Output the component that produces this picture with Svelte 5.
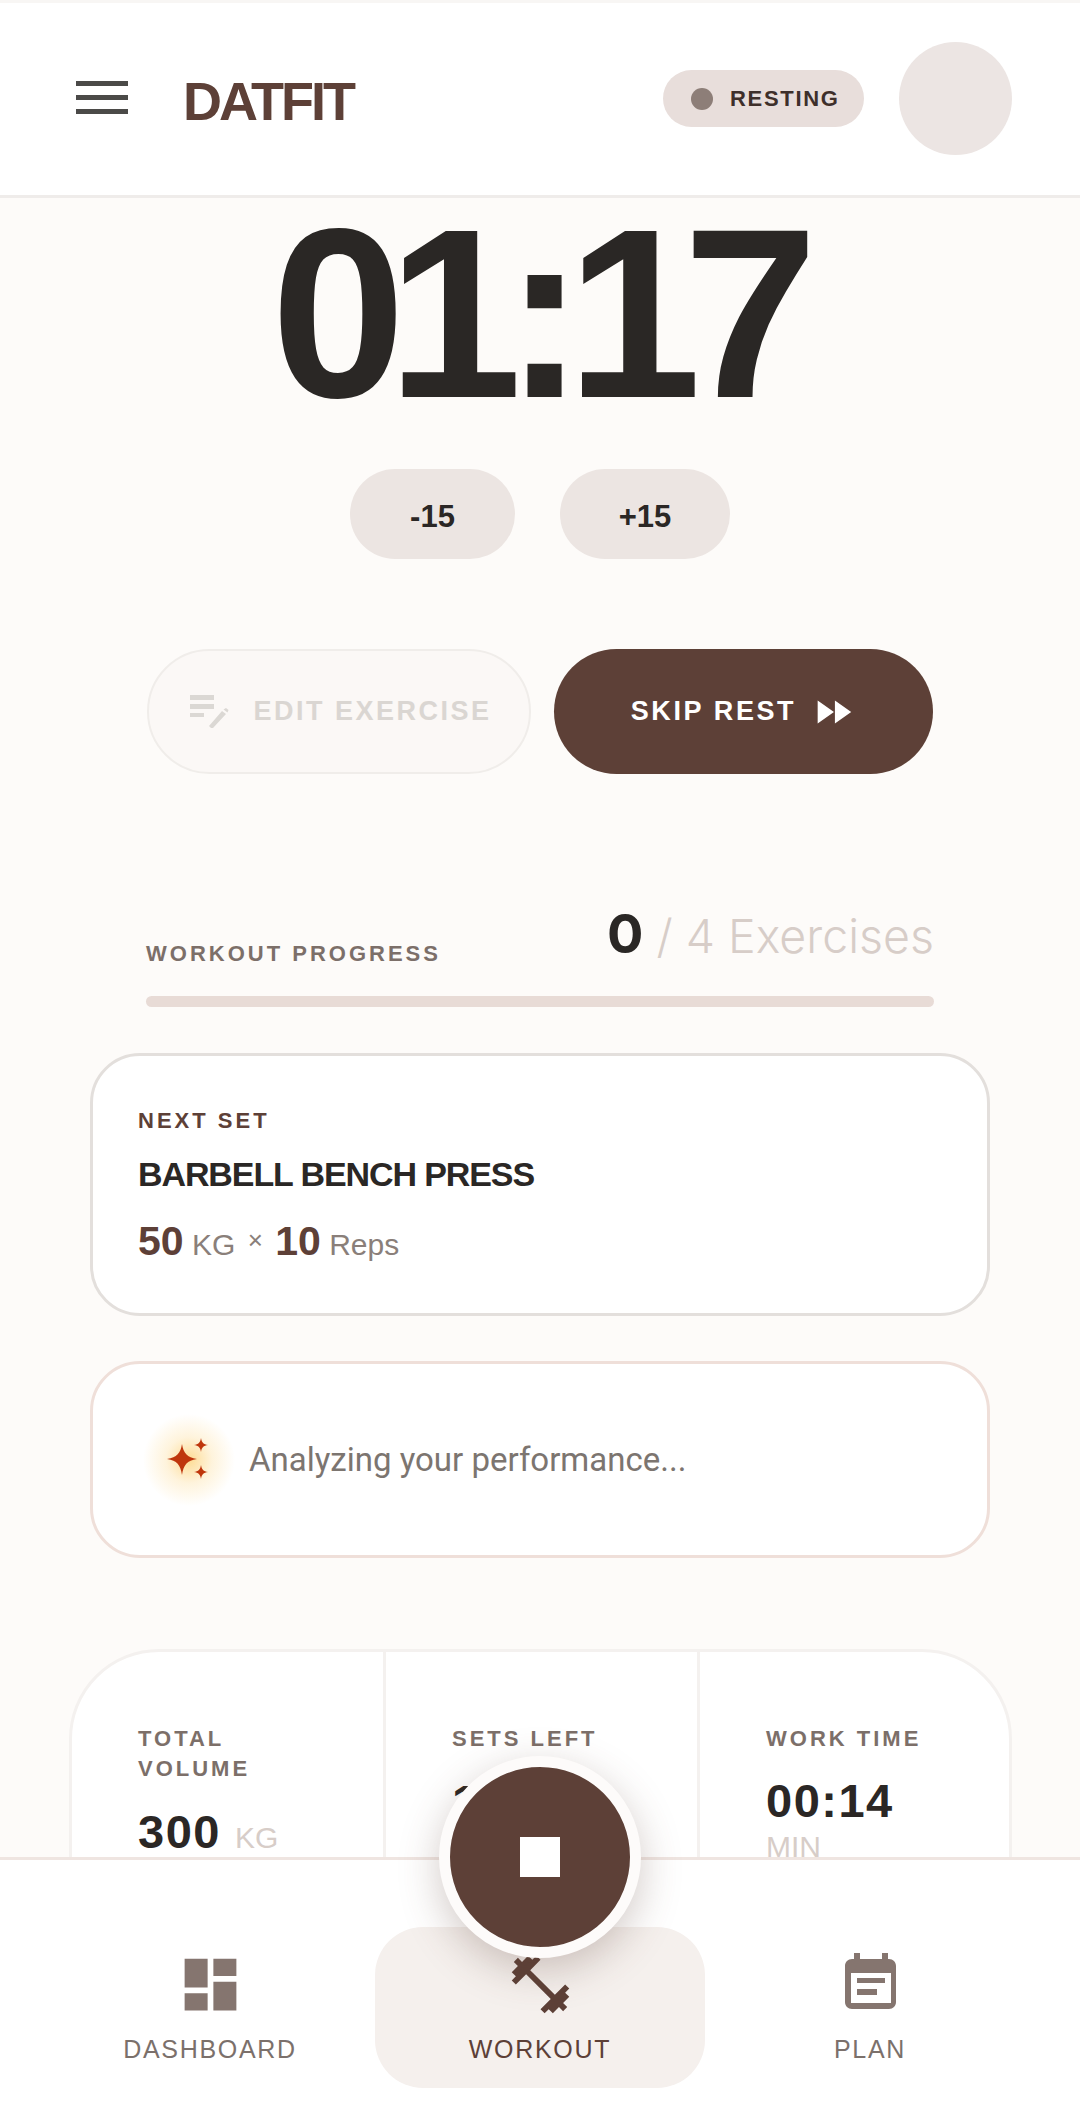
<script>
  const stats = [
    { label: 'TOTAL VOLUME', value: '300', unit: 'KG' },
    { label: 'SETS LEFT', value: '11', unit: '' },
    { label: 'WORK TIME', value: '00:14', unit: 'MIN', stack: true }
  ];
</script>

<div class="page">
  <header class="topbar">
    <button class="menu" aria-label="Menu"><span></span><span></span><span></span></button>
    <div class="logo">DATFIT</div>
    <div class="status"><i></i>RESTING</div>
    <div class="avatar"></div>
  </header>

  <main>
    <div class="timer">01:17</div>

    <div class="adjust">
      <button class="minus">-15</button>
      <button class="plus">+15</button>
    </div>

    <div class="actions">
      <button class="edit">
        <svg width="40" height="34" viewBox="0 0 40 34" fill="#dbd8d4">
          <path d="M0 0h24v5H0zM0 9h24v5H0zM0 18h14v4H0z" />
          <path d="M21 33l-2-2 13-15 4 3-13 14zM33.500 14.500l2.500-1.500 2.500 2-1 2.500z" />
        </svg>
        EDIT EXERCISE
      </button>
      <button class="skip">
        SKIP REST
        <svg width="46" height="46" viewBox="0 0 24 24" fill="#fff">
          <path d="M4 18l8.500-6L4 6v12zm9-12v12l8.500-6L13 6z" />
        </svg>
      </button>
    </div>

    <section class="progress">
      <div class="progress-head">
        <span class="eyebrow">WORKOUT PROGRESS</span>
        <span class="count"><b>0</b> / 4 Exercises</span>
      </div>
      <div class="track"></div>
    </section>

    <section class="card next">
      <div class="next-label">NEXT SET</div>
      <h2>BARBELL BENCH PRESS</h2>
      <div class="load">
        <b>50</b> <span>KG</span> <em>×</em> <b>10</b> <span>Reps</span>
      </div>
    </section>

    <section class="card insight">
      <div class="glow">
        <svg width="60" height="60" viewBox="0 0 60 60" fill="#bf360c">
          <path d="M23 14c1.500 9 5 13.500 15 15-10 1.500-13.500 6-15 16-1.500-10-5-14.500-15-16 10-1.500 13.500-6 15-15z" />
          <path d="M42 8c.7 4.500 2.500 6.500 7 7-4.500.7-6.300 2.500-7 7-.7-4.500-2.500-6.300-7-7 4.500-.5 6.300-2.500 7-7z" />
          <path d="M42 35c.7 4.500 2.500 6.500 7 7-4.500.7-6.300 2.500-7 7-.7-4.500-2.500-6.300-7-7 4.500-.5 6.300-2.500 7-7z" />
        </svg>
      </div>
      <p>Analyzing your performance...</p>
    </section>

    <section class="stats">
      {#each stats as s}
        <div class="stat">
          <div class="eyebrow">{s.label}</div>
          <div class="stat-value" class:stack={s.stack}>
            <b>{s.value}</b>
            {#if s.unit}<span>{s.unit}</span>{/if}
          </div>
        </div>
      {/each}
    </section>
  </main>

  <nav>
    <button class="fab" aria-label="Stop workout"><i></i></button>
    <div class="tab">
      <svg width="69" height="69" viewBox="0 0 24 24" fill="#85756f">
        <path d="M3 13h8V3H3v10zm0 8h8v-6H3v6zm10 0h8V11h-8v10zm0-18v6h8V3h-8z" />
      </svg>
      DASHBOARD
    </div>
    <div class="tab active">
      <svg width="69" height="69" viewBox="0 0 24 24" fill="#5d4037">
        <path d="M20.570 14.860L22 13.430 20.570 12 17 15.570 8.430 7 12 3.430 10.570 2 9.140 3.430 7.710 2 5.570 4.140 4.140 2.710 2.710 4.140l1.430 1.430L2 7.710l1.430 1.430L2 10.570 3.430 12 7 8.430 15.570 17 12 20.570 13.430 22l1.430-1.430L16.290 22l2.140-2.140 1.430 1.430 1.430-1.430-1.430-1.430L22 16.290z" />
      </svg>
      WORKOUT
    </div>
    <div class="tab">
      <svg width="69" height="69" viewBox="0 0 69 69" fill="#85756f">
        <path
          fill-rule="evenodd"
          d="M18 3h6v6h22V3h6v6h1c4 0 7 3 7 7v36c0 4-3 7-7 7H16c-4 0-7-3-7-7V16c0-4 3-7 7-7h2zM15 23v30h40V23zM21 28h28v5H21zM21 39h20v6H21z"
        />
      </svg>
      PLAN
    </div>
  </nav>
</div>

<style>
  :global(body) {
    margin: 0;
    background: #fdfbf9;
  }

  .page {
    display: flex;
    flex-direction: column;
    height: 2114px;
    overflow: hidden;
    font-family: 'Liberation Sans', Arial, sans-serif;
    color: #2b2725;
  }

  button {
    border: 0;
    padding: 0;
    font: inherit;
    color: inherit;
    background: none;
  }

  .topbar {
    display: flex;
    align-items: center;
    flex: none;
    box-sizing: border-box;
    height: 198px;
    padding: 0 68px 1px 76px;
    background: #fff;
    border-top: 3px solid #f8f6f4;
    border-bottom: 3px solid #efecea;
  }

  .menu {
    display: flex;
    flex-direction: column;
    gap: 9px;
    width: 52px;
    margin-bottom: 2px;
  }

  .menu span {
    display: block;
    height: 5px;
    background: #4b4a48;
  }

  .logo {
    margin: 5px 0 0 55px;
    font-size: 54px;
    line-height: 1;
    font-weight: 700;
    letter-spacing: -3px;
    color: #5d4037;
  }

  .status {
    display: flex;
    align-items: center;
    gap: 17px;
    box-sizing: border-box;
    width: 201px;
    height: 57px;
    margin-left: auto;
    padding-left: 28px;
    border-radius: 29px;
    background: #e8dedb;
    font-size: 22px;
    font-weight: 700;
    letter-spacing: 1.700px;
    color: #3e2f2a;
  }

  .status i {
    width: 22px;
    height: 22px;
    border-radius: 50%;
    background: #8d7e78;
  }

  .avatar {
    width: 113px;
    height: 113px;
    margin-left: 35px;
    border-radius: 50%;
    background: #ece5e3;
  }

  main {
    flex: 1;
    min-height: 0;
  }

  .timer {
    margin-top: 20px;
    padding-right: 9px;
    height: 190px;
    font-size: 242px;
    line-height: 190px;
    font-weight: 700;
    letter-spacing: -18px;
    text-align: center;
    color: #2a2725;
  }

  .adjust {
    display: flex;
    justify-content: center;
    gap: 45px;
    margin-top: 61px;
  }

  .adjust button {
    box-sizing: border-box;
    height: 90px;
    padding-top: 6px;
    border-radius: 45px;
    background: #ece5e2;
    font-size: 31px;
    font-weight: 700;
  }

  .minus {
    width: 165px;
  }

  .plus {
    width: 170px;
  }

  .actions {
    display: flex;
    gap: 23px;
    margin: 90px 147px 0;
  }

  .actions button {
    display: flex;
    align-items: center;
    justify-content: center;
    height: 125px;
    border-radius: 63px;
    font-size: 27px;
    font-weight: 700;
  }

  .edit {
    box-sizing: border-box;
    gap: 23px;
    width: 384px;
    padding-left: 4px;
    letter-spacing: 2.500px;
    border: 2px solid #f0edea !important;
    background: #fbf8f6 !important;
    color: #dad6d2 !important;
  }

  .skip {
    gap: 14px;
    width: 379px;
    letter-spacing: 2.600px;
    background: #5d4037 !important;
    color: #fff !important;
  }

  .progress {
    margin: 128px 146px 0;
  }

  .progress-head {
    display: flex;
    align-items: flex-end;
    justify-content: space-between;
    height: 70px;
  }

  .eyebrow {
    font-size: 22px;
    line-height: 30px;
    font-weight: 700;
    letter-spacing: 3px;
    color: #7c6f69;
  }

  .progress-head .eyebrow {
    margin-bottom: 3px;
  }

  .count {
    margin-bottom: 6px;
    font-family: Inter, 'Liberation Sans', sans-serif;
    font-size: 46.500px;
    line-height: 60px;
    font-weight: 300;
    color: #d7cdc8;
  }

  .count b {
    font-size: 54px;
    font-weight: 700;
    color: #2a2725;
  }

  .track {
    height: 11px;
    margin-top: 24px;
    border-radius: 6px;
    background: #e8dbd6;
  }

  .card {
    box-sizing: border-box;
    margin: 0 90px;
    border-radius: 50px;
    background: #fff;
  }

  .next {
    height: 263px;
    margin-top: 46px;
    padding: 50px 45px 0;
    border: 3px solid #e3dfdc;
  }

  .next-label {
    font-size: 22px;
    line-height: 30px;
    font-weight: 700;
    letter-spacing: 3px;
    color: #5d4037;
  }

  h2 {
    margin: 16px 0 0;
    font-size: 34px;
    line-height: 44px;
    font-weight: 700;
    letter-spacing: -1.100px;
    color: #2a2725;
  }

  .load {
    margin-top: 19px;
    font-size: 30px;
    line-height: 50px;
    color: #8a7f7a;
  }

  .load b {
    font-size: 41px;
    color: #5d4037;
  }

  .load em {
    margin: 0 4px;
    font-size: 26px;
    font-style: normal;
    vertical-align: 6px;
  }

  .insight {
    display: flex;
    align-items: center;
    height: 197px;
    margin-top: 45px;
    padding-left: 50px;
    border: 3px solid #efdfd9;
  }

  .glow {
    display: flex;
    align-items: center;
    justify-content: center;
    width: 92px;
    height: 92px;
    border-radius: 50%;
    background: radial-gradient(circle closest-side, rgba(253, 214, 130, 0.85) 0%, rgba(254, 232, 185, 0.5) 50%, rgba(255, 255, 255, 0) 100%);
  }

  .insight p {
    margin: 0 0 0 14px;
    font-family: Roboto, 'Liberation Sans', sans-serif;
    font-size: 33px;
    color: #7c7570;
  }

  .stats {
    display: grid;
    grid-template-columns: 311px 314px 1fr;
    box-sizing: border-box;
    height: 320px;
    margin: 91px 68px 0 69px;
    border: 3px solid #f4f1ef;
    border-radius: 90px;
    background: #fff;
  }

  .stat {
    padding: 72px 60px 0 66px;
    border-left: 3px solid #f4f1ef;
  }

  .stat:first-child {
    border-left: 0;
  }

  .stat-value {
    display: flex;
    align-items: baseline;
    gap: 14px;
    margin-top: 22px;
  }

  .stat-value b {
    font-size: 47px;
    line-height: 52px;
    letter-spacing: 1.500px;
  }

  .stat-value span {
    font-size: 30px;
    color: #d7cdc8;
  }

  .stack {
    flex-direction: column;
    gap: 3px;
    margin-top: 21px;
  }

  nav {
    position: relative;
    display: grid;
    grid-template-columns: repeat(3, 330px);
    flex: none;
    box-sizing: border-box;
    height: 257px;
    padding: 67px 45px 0;
    background: #fff;
    border-top: 3px solid #efe5e1;
  }

  .tab {
    display: flex;
    flex-direction: column;
    align-items: center;
    height: 161px;
    border-radius: 48px;
    font-size: 25px;
    line-height: 30px;
    letter-spacing: 1.700px;
    color: #7b706b;
  }

  .tab svg {
    margin: 23px 0 15px;
  }

  .active {
    background: #f5f0ed;
    color: #5d4037;
  }

  .fab {
    position: absolute;
    top: -104px;
    left: 439px;
    z-index: 1;
    display: flex;
    align-items: center;
    justify-content: center;
    box-sizing: border-box;
    width: 202px;
    height: 202px;
    border: 11px solid #fdfbfa;
    border-radius: 50%;
    background: #5d4037;
    box-shadow: 0 12px 40px rgba(93, 64, 55, 0.28);
  }

  .fab i {
    width: 40px;
    height: 40px;
    background: #fff;
  }
</style>
